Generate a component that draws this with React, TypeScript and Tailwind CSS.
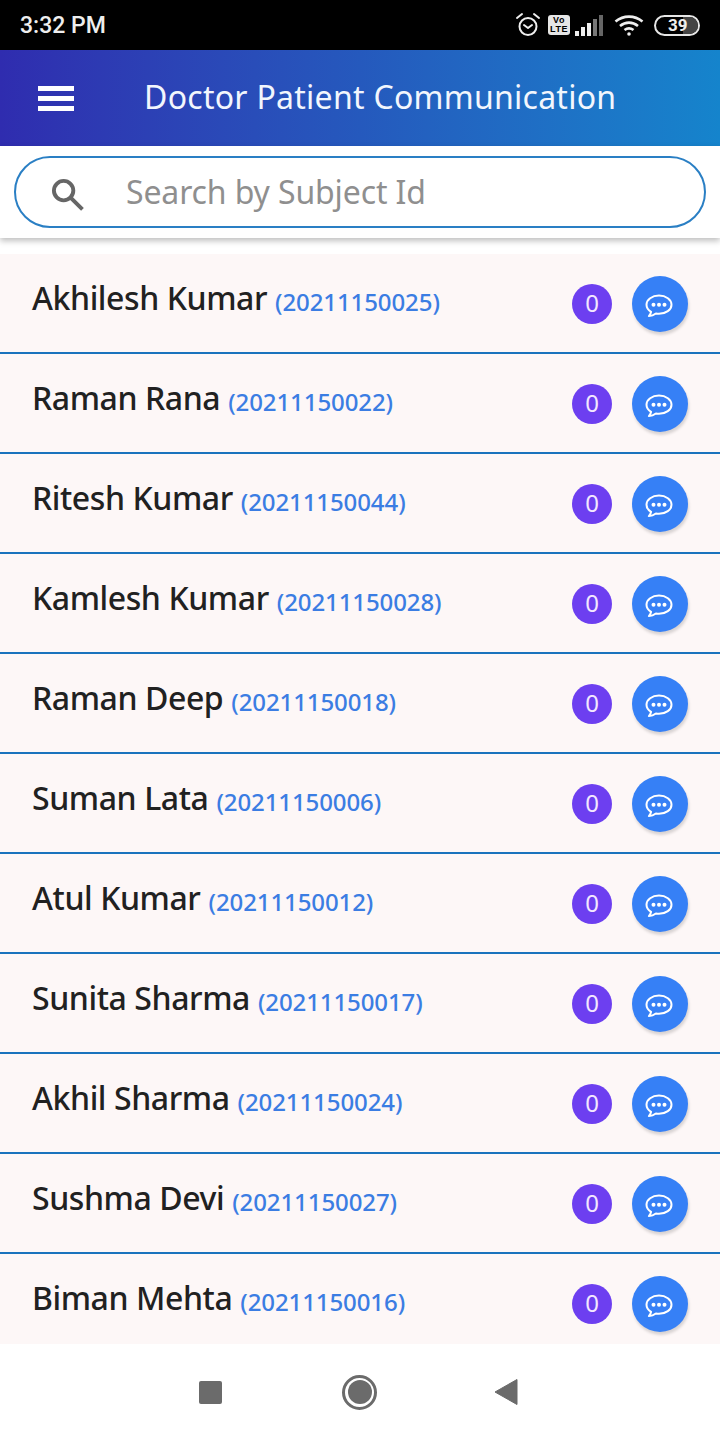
const FONT = "font-['Noto_Sans',sans-serif]"

const PATIENTS = [
  { name: 'Akhilesh Kumar', id: '20211150025' },
  { name: 'Raman Rana', id: '20211150022' },
  { name: 'Ritesh Kumar', id: '20211150044' },
  { name: 'Kamlesh Kumar', id: '20211150028' },
  { name: 'Raman Deep', id: '20211150018' },
  { name: 'Suman Lata', id: '20211150006' },
  { name: 'Atul Kumar', id: '20211150012' },
  { name: 'Sunita Sharma', id: '20211150017' },
  { name: 'Akhil Sharma', id: '20211150024' },
  { name: 'Sushma Devi', id: '20211150027' },
  { name: 'Biman Mehta', id: '20211150016' },
]

function StatusIcons() {
  return (
    <div className="flex items-center">
      {/* Alarm */}
      <svg width="26" height="26" viewBox="0 0 26 26" fill="none" stroke="#eee" strokeWidth="2" className="mr-[7px]">
        <circle cx="13" cy="14.500" r="8.500" />
        <path d="M9 13l4 3 4-3" strokeLinecap="round" strokeLinejoin="round" />
        <path d="M2 6l5-4M24 6l-5-4" strokeLinecap="round" />
      </svg>
      {/* VoLTE */}
      <div className="w-[22px] h-[20px] rounded-[3px] bg-[#e6e6e6] flex flex-col items-center justify-center text-black font-['Liberation_Sans',sans-serif] font-bold text-[9px] leading-[9px] tracking-[0.5px]">
        <span>Vo</span>
        <span>LTE</span>
      </div>
      {/* Signal */}
      <svg width="28" height="21" viewBox="0 0 28 21" className="ml-[5px] mr-[11px]">
        <rect x="0" y="16" width="4" height="5" fill="#eee" />
        <rect x="6" y="12" width="4" height="9" fill="#eee" />
        <rect x="12" y="8" width="4" height="13" fill="#eee" />
        <rect x="18" y="4" width="4" height="17" fill="#777" />
        <rect x="24" y="0" width="4" height="21" fill="#666" />
      </svg>
      {/* Wifi */}
      <svg width="30" height="22" viewBox="0 0 30 22" fill="none" stroke="#eee" strokeWidth="2.6" className="mr-[10px]">
        <path d="M1.500 7.500c8-6.500 19-6.500 27 0" />
        <path d="M6 12c5.500-4.500 12.500-4.500 18 0" />
        <path d="M10.500 16c2.700-2 6.300-2 9 0" />
        <circle cx="15" cy="20" r="1.800" fill="#eee" stroke="none" />
      </svg>
      {/* Battery */}
      <div className="relative w-[46px] h-[21px] rounded-full border-2 border-[#e6e6e6] overflow-hidden">
        <div className="absolute right-0 top-0 bottom-0 w-[15px] bg-[#444]" />
        <span className="absolute left-[12px] top-[-2px] font-['Roboto',sans-serif] font-bold text-[17px] leading-[21px] text-[#eee]">39</span>
      </div>
    </div>
  )
}

function ChatIcon() {
  return (
    <svg width="28" height="26" viewBox="0 0 28 26" fill="none" className="mt-[4px] ml-[-2px]">
      <path
        d="M14 2.500c-6.900 0-12.500 4.100-12.500 9.200 0 2.900 1.800 5.400 4.600 7.100-.3 1.600-1.200 3.100-2.200 4.300 2.800-.2 5.200-1.300 7-2.600 1 .2 2 .3 3.100.3 6.900 0 12.500-4 12.500-9.100S20.900 2.500 14 2.500z"
        stroke="#fff"
        strokeWidth="2"
        strokeLinejoin="round"
      />
      <circle cx="8.500" cy="11.700" r="2" fill="#fff" />
      <circle cx="14" cy="11.700" r="2" fill="#fff" />
      <circle cx="19.500" cy="11.700" r="2" fill="#fff" />
    </svg>
  )
}

function PatientRow({ name, id }: { name: string; id: string }) {
  return (
    <div className="h-[100px] shrink-0 flex items-center bg-[#fdf7f7] border-b-2 border-[#1a73bd] pt-[2px] pl-[32px] pr-[32px]">
      <div className="flex-1 flex items-baseline whitespace-nowrap mt-[-13px]">
        <span className="text-[32px] leading-[44px] font-medium tracking-[-0.42px] text-[#212121]">{name}</span>
        <span className="ml-[8px] translate-y-px text-[24px] font-medium tracking-[-0.1px] text-[#3b7de3]">({id})</span>
      </div>
      <div className="w-[40px] h-[40px] pb-[2px] rounded-full bg-[#6d3ff0] text-[#f3e8ff] text-[24px] leading-none flex items-center justify-center">0</div>
      <div className="ml-[20px] w-[56px] h-[56px] rounded-full bg-[#3680f6] shadow-[1px_3px_3px_rgba(0,0,0,0.15)] flex items-center justify-center">
        <ChatIcon />
      </div>
    </div>
  )
}

export default function App() {
  return (
    <div className={`w-[720px] h-[1440px] flex flex-col bg-white overflow-hidden ${FONT}`}>
      {/* Status bar */}
      <div className="h-[50px] shrink-0 bg-black flex items-center justify-between pl-[20px] pr-[20px]">
        <span className="font-['Roboto',sans-serif] font-medium text-[23px] text-[#eeeeee] mt-[2px]">3:32 PM</span>
        <StatusIcons />
      </div>

      {/* Header */}
      <div className="h-[96px] shrink-0 flex items-center bg-gradient-to-r from-[#2f2caf] via-[#2559bd] to-[#1584cc] pl-[38px]">
        <div className="w-[36px] flex flex-col gap-[5px]">
          <div className="h-[5px] bg-white" />
          <div className="h-[5px] bg-white" />
          <div className="h-[5px] bg-white" />
        </div>
        <span className="ml-[70px] mt-[-2px] text-[32px] tracking-[0.27px] text-[#f2f6fd]">Doctor Patient Communication</span>
      </div>

      {/* Search */}
      <div className="h-[92px] shrink-0 bg-white px-[14px] pt-[10px] shadow-[0_3px_6px_rgba(0,0,0,0.25)] z-10">
        <div className="h-[72px] rounded-full border-2 border-[#2a7fc4] flex items-center pl-[35px]">
          <svg width="33" height="33" viewBox="0 0 34 34" fill="none" stroke="#666" strokeWidth="4" className="mt-[5px]">
            <circle cx="13" cy="13" r="10" />
            <path d="M20.500 20.500L31 31" strokeLinecap="square" />
          </svg>
          <span className="ml-[42px] text-[32px] tracking-[-0.13px] text-[#8f8f8f]">Search by Subject Id</span>
        </div>
      </div>

      {/* List */}
      <div className="flex-1 min-h-0 overflow-hidden pt-[16px] flex flex-col">
        {PATIENTS.map((p) => (
          <PatientRow key={p.id} name={p.name} id={p.id} />
        ))}
      </div>

      {/* Android nav */}
      <div className="h-[96px] shrink-0 bg-white relative z-10 flex items-center pl-[199px]">
        <div className="w-[23px] h-[23px] rounded-[2px] bg-[#6b6b6b]" />
        <div className="ml-[120px] w-[35px] h-[35px] rounded-full border-[3px] border-[#6b6b6b] flex items-center justify-center">
          <div className="w-[24px] h-[24px] rounded-full bg-[#6b6b6b]" />
        </div>
        <svg width="24" height="28" viewBox="0 0 24 28" className="ml-[117px]">
          <path d="M23 1.500v25L1 14z" fill="#6b6b6b" stroke="#6b6b6b" strokeLinejoin="round" />
        </svg>
      </div>
    </div>
  )
}
